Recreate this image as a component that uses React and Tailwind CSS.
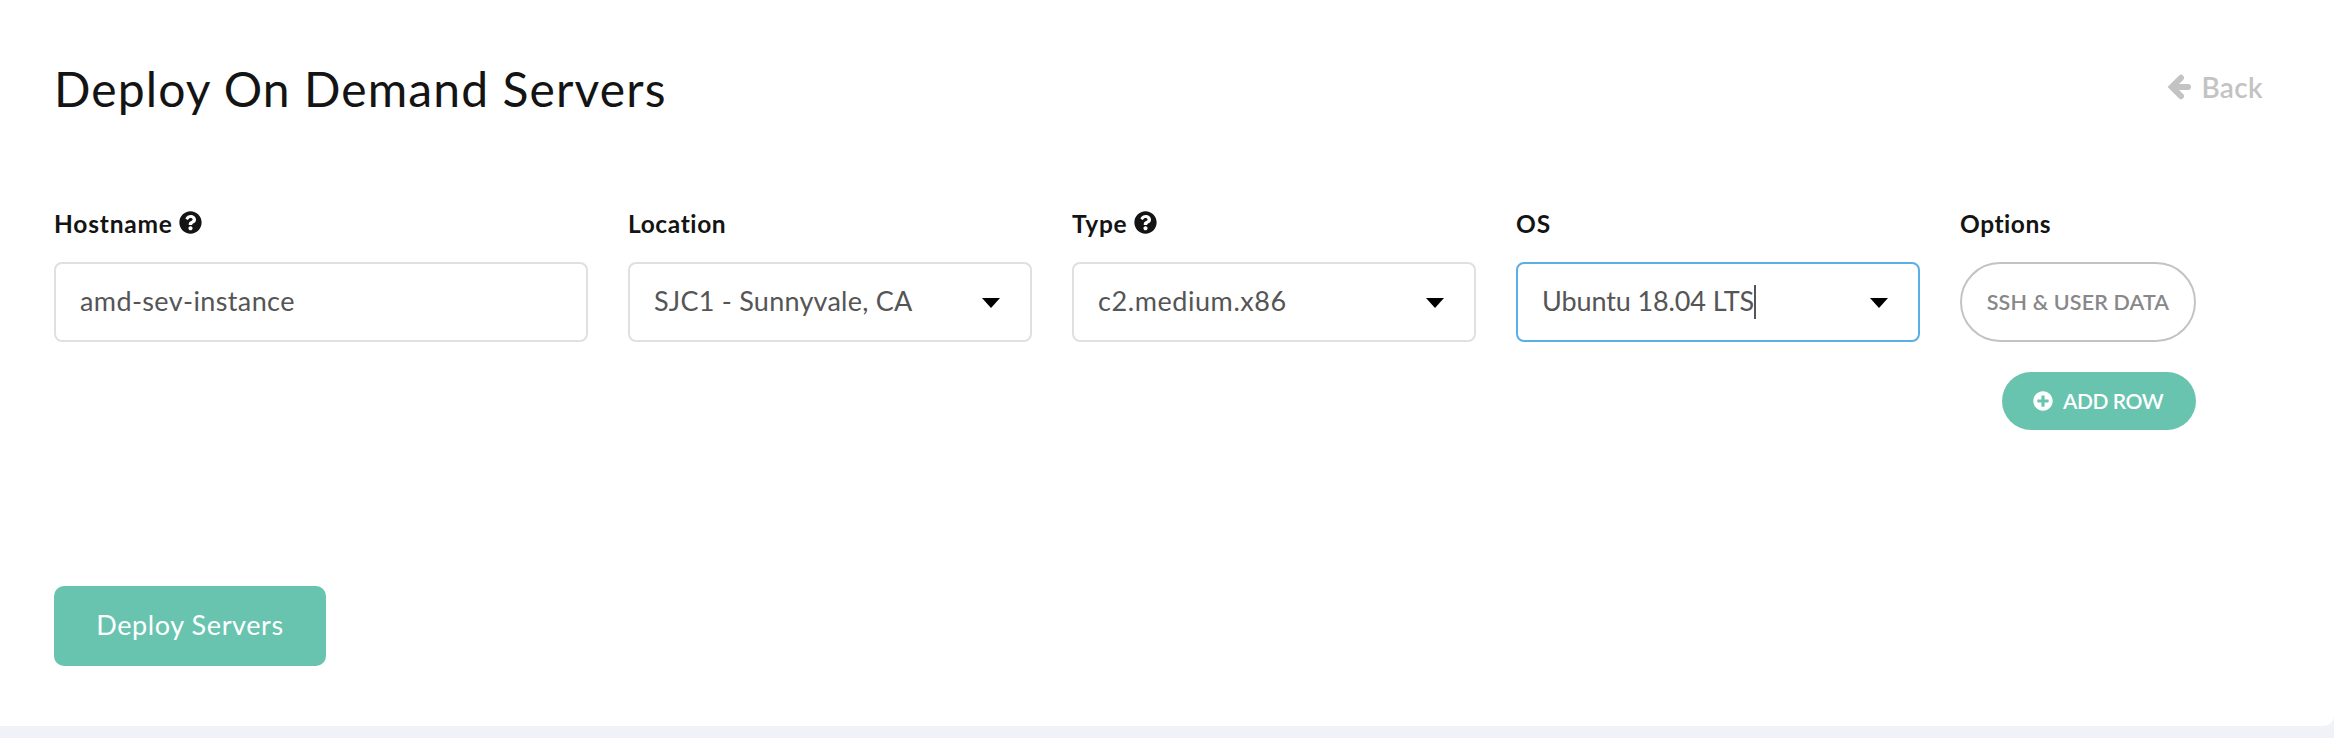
import React from "react";
import { FaQuestionCircle, FaPlusCircle } from "react-icons/fa";

function Label({ children, help, className = "" }) {
  return (
    <div className="flex h-[30px] items-center pt-[1px] whitespace-nowrap text-[24.5px] leading-[30px] font-bold text-[#141414]">
      <span className={className}>{children}</span>
      {help && <FaQuestionCircle className="mb-[2px] ml-[6.5px] size-[23px]" />}
    </div>
  );
}

function Field({ label, help, labelClass, width, children, valueClass = "", focused, select }) {
  return (
    <div className={`flex flex-col gap-[24px] ${width}`}>
      <Label help={help} className={labelClass}>{label}</Label>
      <div
        className={`flex h-[80px] items-center justify-between rounded-[8px] border-2 pr-[30px] pl-[24px] text-[27px] whitespace-nowrap text-[#555] ${
          focused ? "border-[#5aafe6]" : "border-[#e0e0e0]"
        }`}
      >
        <div className="flex items-center pb-[2px]">
          <span className={valueClass}>{children}</span>
          {focused && <span className="-mb-[2px] h-[34px] w-[2px] bg-[#555]" />}
        </div>
        {select && (
          <svg className="mt-[1px] h-[10px] w-[18px]" viewBox="0 0 18 10">
            <path d="M0 0H18L9 10Z" fill="#000" />
          </svg>
        )}
      </div>
    </div>
  );
}

export default function App() {
  return (
    <div className="h-[738px] w-[2334px] bg-[#f1f2f7] font-['Lato',sans-serif] [font-variant-ligatures:none]">
      <main className="flex h-[726px] flex-col rounded-br-[10px] bg-white pl-[54px]">
        <header className="flex h-[118px] items-start justify-between pt-[58px] pr-[71px]">
          <h1 className="pt-[1px] text-[48px] leading-[60px] tracking-[1.1px] text-[#141414]">Deploy On Demand Servers</h1>
          <a className="flex h-[58px] items-center gap-[9px] text-[28px] font-semibold text-[#c3c3c3]">
            <svg className="h-[26px] w-[25px]" viewBox="0 0 25 26" fill="none" stroke="currentColor" strokeWidth="6" strokeLinecap="round">
              <path d="M14 3.8L4.8 13L14 22.2M5.5 13H21" />
            </svg>
            <span className="pb-[1px] tracking-[0.33px]">Back</span>
          </a>
        </header>

        <section className="mt-[90px] flex gap-[40px]">
          <Field label="Hostname" help width="w-[534px]" labelClass="tracking-[0.8px]" valueClass="tracking-[0.38px]">amd-sev-instance</Field>
          <Field label="Location" width="w-[404px]" labelClass="tracking-[0.6px]" valueClass="tracking-[0.24px]" select>SJC1 - Sunnyvale, CA</Field>
          <Field label="Type" help width="w-[404px]" labelClass="tracking-[0.7px]" valueClass="tracking-[0.57px]" select>c2.medium.x86</Field>
          <Field label="OS" width="w-[404px]" labelClass="tracking-[1px]" valueClass="tracking-[-0.12px]" select focused>Ubuntu 18.04 LTS</Field>
          <div className="flex w-[236px] flex-col">
            <Label className="tracking-[0.55px]">Options</Label>
            <button className="mt-[24px] flex h-[80px] items-center justify-center rounded-full border-2 border-[#c3c3c3] text-[21.5px] font-semibold whitespace-nowrap text-[#888]">
              <span className="tracking-[0.15px]">SSH &amp; USER DATA</span>
            </button>
            <button className="mt-[30px] flex h-[58px] w-[194px] items-center self-end rounded-full bg-[#68c4af] pb-[1px] pl-[31px] text-[21px] font-semibold whitespace-nowrap text-white">
              <FaPlusCircle className="mr-[10px] size-[20px]" />
              <span className="tracking-[-0.45px]">ADD ROW</span>
            </button>
          </div>
        </section>

        <button className="mt-[156px] flex h-[80px] w-[272px] items-center justify-center rounded-[10px] bg-[#68c4af] pb-[2px] text-[27px] whitespace-nowrap text-white">
          <span className="tracking-[0.6px]">Deploy Servers</span>
        </button>
      </main>
    </div>
  );
}
